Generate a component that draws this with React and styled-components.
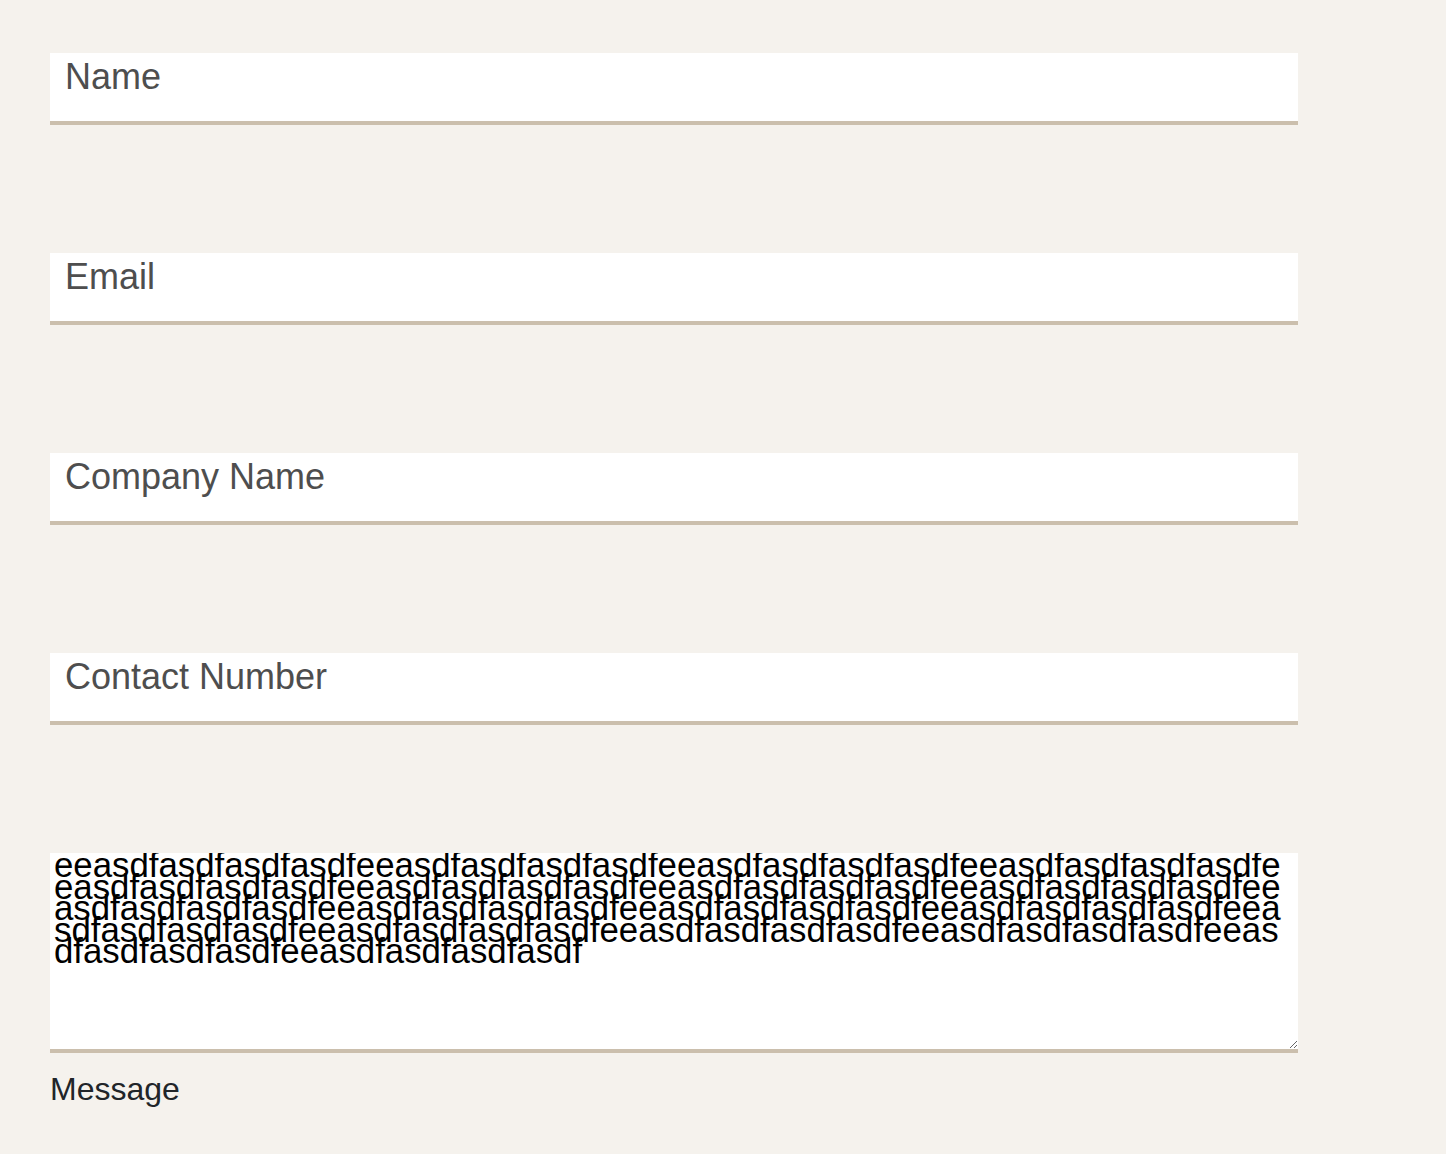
import React from "react";
import styled, { createGlobalStyle } from "styled-components";

const GlobalStyle = createGlobalStyle`
  html, body {
    margin: 0;
    padding: 0;
    background: #f5f2ed;
  }
  body {
    font-family: "Liberation Sans", Helvetica, Arial, sans-serif;
  }
`;

const Form = styled.form`
  display: flex;
  flex-direction: column;
  gap: 128px;
  padding: 53px 0 40px 50px;
  width: 1248px;
`;

const Field = styled.input`
  display: block;
  box-sizing: border-box;
  width: 100%;
  height: 72px;
  margin: 0;
  padding: 3.5px 15px 24.5px;
  border: none;
  border-bottom: 4px solid #cbbfad;
  border-radius: 0;
  background: #fff;
  font-family: "Liberation Sans", Helvetica, Arial, sans-serif;
  font-size: 36px;
  line-height: 40px;
  color: #222;
  outline: none;

  &::placeholder {
    color: #4e4e4e;
    opacity: 1;
  }
`;

const MessageGroup = styled.div`
  display: flex;
  flex-direction: column;
`;

const MessageBox = styled.textarea`
  display: block;
  box-sizing: border-box;
  width: 100%;
  height: 200px;
  margin: 0;
  padding: 1px 4px;
  border: none;
  border-bottom: 4px solid #cbbfad;
  border-radius: 0;
  background: #fff;
  font-family: "Liberation Sans", Helvetica, Arial, sans-serif;
  font-size: 34.8px;
  line-height: 21.6px;
  color: #000;
  outline: none;
`;

const Label = styled.label`
  display: block;
  margin-top: 18px;
  font-size: 32px;
  color: #212529;
`;

const fields = ["Name", "Email", "Company Name", "Contact Number"];
const message = "eeasdfasdfasdfasdf".repeat(18);

export default function App() {
  return (
    <>
      <GlobalStyle />
      <Form onSubmit={(e) => e.preventDefault()}>
        {fields.map((f) => (
          <Field key={f} type="text" placeholder={f} aria-label={f} />
        ))}
        <MessageGroup>
          <MessageBox id="message" defaultValue={message} />
          <Label htmlFor="message">Message</Label>
        </MessageGroup>
      </Form>
    </>
  );
}
